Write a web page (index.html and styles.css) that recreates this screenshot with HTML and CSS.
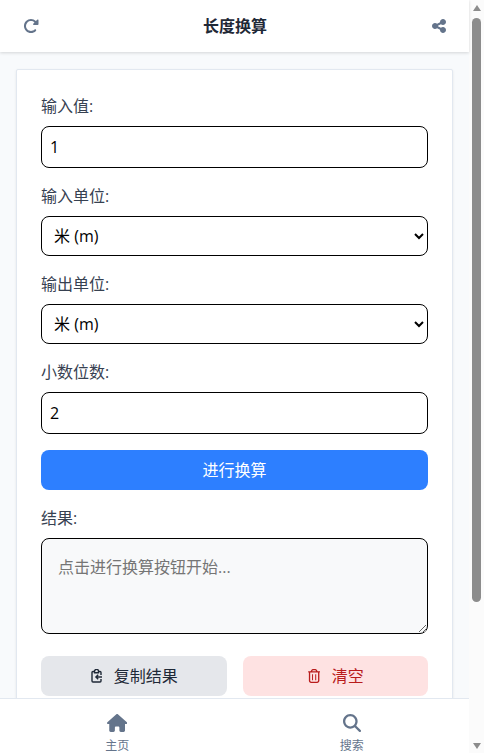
FILE: index.html
```html
<!DOCTYPE html>
<html lang="zh">
<head>
    <meta charset="UTF-8">
    <meta name="viewport" content="width=device-width, initial-scale=1.0">
    <title>长度换算</title>
    <link rel="stylesheet" href="styles.css">
</head>
<body>
    <div class="app">
        <header class="topbar">
            <svg class="top-icon" viewBox="0 0 512 512"><path d="M463.5 224H472c13.300 0 24-10.700 24-24V72c0-9.700-5.800-18.500-14.800-22.200s-19.300-1.700-26.200 5.200L413.400 96.600c-87.600-86.500-228.700-86.200-315.800 1c-87.500 87.500-87.500 229.300 0 316.800s229.300 87.500 316.800 0c12.500-12.500 12.500-32.800 0-45.300s-32.800-12.500-45.300 0c-62.500 62.500-163.800 62.500-226.300 0s-62.500-163.800 0-226.300c62.200-62.200 162.700-62.500 225.300-1L327 183c-6.900 6.900-8.900 17.200-5.200 26.200s12.500 14.800 22.200 14.800H463.500z"/></svg>
            <h1>长度换算</h1>
            <svg class="top-icon" viewBox="0 0 448 512"><path d="M352 224c53 0 96-43 96-96s-43-96-96-96s-96 43-96 96c0 4 .2 8 .7 11.900l-94.100 47C145.400 170.200 121.900 160 96 160c-53 0-96 43-96 96s43 96 96 96c25.900 0 49.400-10.200 66.600-26.900l94.100 47c-.5 3.900-.7 7.800-.7 11.900c0 53 43 96 96 96s96-43 96-96s-43-96-96-96c-25.900 0-49.400 10.200-66.600 26.900l-94.100-47c.5-3.900 .7-7.800 .7-11.900s-.2-8-.7-11.900l94.100-47C302.600 213.800 326.100 224 352 224z"/></svg>
        </header>

        <main class="content">
            <form class="card">
                <div class="form-group">
                    <label for="inputValue">输入值:</label>
                    <input type="number" id="inputValue" value="1">
                </div>
                <div class="form-group">
                    <label for="inputUnit">输入单位:</label>
                    <select id="inputUnit"><option>米 (m)</option><option>千米 (km)</option></select>
                </div>
                <div class="form-group">
                    <label for="outputUnit">输出单位:</label>
                    <select id="outputUnit"><option>米 (m)</option><option>千米 (km)</option></select>
                </div>
                <div class="form-group">
                    <label for="decimals">小数位数:</label>
                    <input type="number" id="decimals" value="2">
                </div>
                <button type="button" class="btn-primary">进行换算</button>
                <div class="form-group">
                    <label for="result">结果:</label>
                    <textarea id="result" placeholder="点击进行换算按钮开始..." readonly></textarea>
                </div>
                <div class="actions">
                    <button type="button" class="btn-copy">
                        <svg viewBox="0 0 11 14"><path d="M7.800 2.500H9a1 1 0 0 1 1 1V6M10 10v2a1 1 0 0 1-1 1H2a1 1 0 0 1-1-1V3.500a1 1 0 0 1 1-1h1.200"/><path d="M3.500 3.700V2.300a2 2 0 0 1 4 0v1.400z"/><path d="M11 8H5M7.200 5.700 4.900 8l2.300 2.300"/></svg>
                        <span>复制结果</span>
                    </button>
                    <button type="button" class="btn-clear">
                        <svg viewBox="0 0 448 512"><path fill-rule="evenodd" d="M170.500 51.600L151.500 80h145l-19-28.400c-1.500-2.200-4-3.600-6.700-3.600H177.100c-2.700 0-5.200 1.300-6.700 3.600zm147-26.600L354.200 80H368h48 8c13.300 0 24 10.700 24 24s-10.700 24-24 24h-8V432c0 44.200-35.800 80-80 80H112c-44.200 0-80-35.800-80-80V128H24c-13.300 0-24-10.700-24-24S10.700 80 24 80h8H80 93.800l36.700-55.100C140.900 9.400 158.400 0 177.100 0h93.700c18.700 0 36.200 9.400 46.600 24.900zM80 128V432c0 17.700 14.300 32 32 32H336c17.700 0 32-14.300 32-32V128H80zM148 192h36v216h-36zM264 192h36v216h-36z"/></svg>
                        <span>清空</span>
                    </button>
                </div>
            </form>
        </main>

        <nav class="bottom-nav">
            <a class="nav-item">
                <svg viewBox="0 0 576 512"><path d="M575.800 255.500c0 18-15 32.100-32 32.100h-32l.7 160.200c0 2.700-.2 5.400-.5 8.100V472c0 22.100-17.900 40-40 40H456c-1.100 0-2.200 0-3.300-.1c-1.400 .1-2.800 .1-4.200 .1H416 392c-22.100 0-40-17.900-40-40V448 384c0-17.700-14.300-32-32-32H256c-17.700 0-32 14.300-32 32v64 24c0 22.100-17.900 40-40 40H160 128.100c-1.500 0-3-.1-4.500-.2c-1.200 .1-2.400 .2-3.600 .2H104c-22.100 0-40-17.900-40-40V360c0-.9 0-1.900 .1-2.800V287.600H32c-18 0-32-14-32-32.100c0-9 3-17 10-24L266.400 8c7-7 15-8 22-8s15 2 21 7L564.800 231.500c8 7 12 15 11 24z"/></svg>
                <span>主页</span>
            </a>
            <a class="nav-item">
                <svg viewBox="0 0 512 512"><path d="M416 208c0 45.900-14.900 88.300-40 122.700L502.600 457.400c12.500 12.500 12.500 32.800 0 45.300s-32.800 12.500-45.300 0L330.700 376c-34.400 25.200-76.800 40-122.700 40C93.100 416 0 322.900 0 208S93.100 0 208 0S416 93.100 416 208zM208 352a144 144 0 1 0 0-288 144 144 0 1 0 0 288z"/></svg>
                <span>搜索</span>
            </a>
        </nav>
    </div>

    <div class="scrollbar">
        <span class="arrow-up"></span>
        <div class="track"><div class="thumb"></div></div>
        <span class="arrow-down"></span>
    </div>
</body>
</html>
```

FILE: styles.css
```css
* {
    box-sizing: border-box;
    margin: 0;
    padding: 0;
}

html, body {
    height: 100%;
    overflow: hidden;
}

body {
    display: flex;
    font-family: "Open Sans", "Noto Sans CJK SC", sans-serif;
    background-color: #f8fafc;
    color: #374151;
    font-size: 16px;
}

.app {
    flex: 1;
    min-width: 0;
    height: 100%;
    display: flex;
    flex-direction: column;
}

.topbar {
    height: 52px;
    flex-shrink: 0;
    display: flex;
    align-items: center;
    justify-content: space-between;
    padding: 0 22px 0 23px;
    background-color: white;
    box-shadow: 0 1px 3px rgba(0, 0, 0, 0.15);
    position: relative;
}

.topbar h1 {
    font-size: 16px;
    line-height: 24px;
    font-weight: 600;
    color: #1f2937;
}

.top-icon {
    width: 16px;
    height: 16px;
    fill: #64748b;
}

.content {
    flex: 1;
    min-height: 0;
    overflow: hidden;
    padding: 17px 16px 0;
}

.card {
    background-color: white;
    border: 1px solid #e2e8f0;
    border-radius: 2px;
    box-shadow: 0 1px 3px rgba(0, 0, 0, 0.08);
    padding: 24px;
}

.form-group {
    margin-bottom: 16px;
}

label {
    display: block;
    margin-bottom: 8px;
    font-size: 16px;
    line-height: 24px;
    color: #374151;
}

input, select, textarea {
    display: block;
    width: 100%;
    border: 1px solid black;
    border-radius: 8px;
    font-family: inherit;
    font-size: 16px;
    color: black;
    background-color: white;
}

input {
    height: 42px;
    padding: 0 8px;
}

select {
    height: 40px;
    padding: 0 4px 0 8px;
}

textarea {
    height: 96px;
    padding: 16px;
    line-height: 24px;
    background-color: #f8f9fa;
}

textarea::placeholder {
    color: #757575;
}

button {
    border: none;
    border-radius: 8px;
    font-family: inherit;
    font-size: 16px;
    line-height: 24px;
    cursor: pointer;
}

.btn-primary {
    display: block;
    width: 100%;
    height: 40px;
    margin-bottom: 16px;
    background-color: #2d7fff;
    color: white;
}

.actions {
    display: flex;
    gap: 16px;
    margin-top: 22px;
}

.actions button {
    flex: 1;
    height: 40px;
    display: flex;
    align-items: center;
    justify-content: center;
    gap: 12px;
    padding-left: 1px;
}

.actions svg {
    height: 14px;
}

.btn-copy {
    background-color: #e5e7eb;
    color: #1f2937;
}

.btn-copy svg {
    width: 11px;
    fill: none;
    stroke: #1f2937;
    stroke-width: 1.4;
}

.btn-clear {
    background-color: #fee2e2;
    color: #b91c1c;
}

.btn-clear svg {
    width: 12.25px;
    fill: #b91c1c;
}

.bottom-nav {
    height: 55px;
    flex-shrink: 0;
    display: flex;
    background-color: white;
    border-top: 1px solid #e2e8f0;
}

.nav-item {
    flex: 1;
    display: flex;
    flex-direction: column;
    align-items: center;
    gap: 6px;
    padding-top: 15px;
    color: #64748b;
    font-size: 12px;
    line-height: 16px;
}

.nav-item svg {
    height: 18px;
    flex-shrink: 0;
    fill: #64748b;
}

.scrollbar {
    width: 15px;
    height: 100%;
    flex-shrink: 0;
    display: flex;
    flex-direction: column;
    align-items: center;
    background-color: #fbfbfb;
}

.track {
    flex: 1;
    width: 100%;
}

.thumb {
    width: 9px;
    height: 584px;
    margin-left: 3px;
    border-radius: 5px;
    background-color: #8c8c8c;
}

.arrow-up, .arrow-down {
    width: 0;
    height: 0;
    border-left: 4.5px solid transparent;
    border-right: 4.5px solid transparent;
}

.arrow-up {
    border-bottom: 6px solid #8c8c8c;
    margin: 5px 0 7px;
}

.arrow-down {
    border-top: 6px solid #8c8c8c;
    margin: 5px 0 4px;
}
```
